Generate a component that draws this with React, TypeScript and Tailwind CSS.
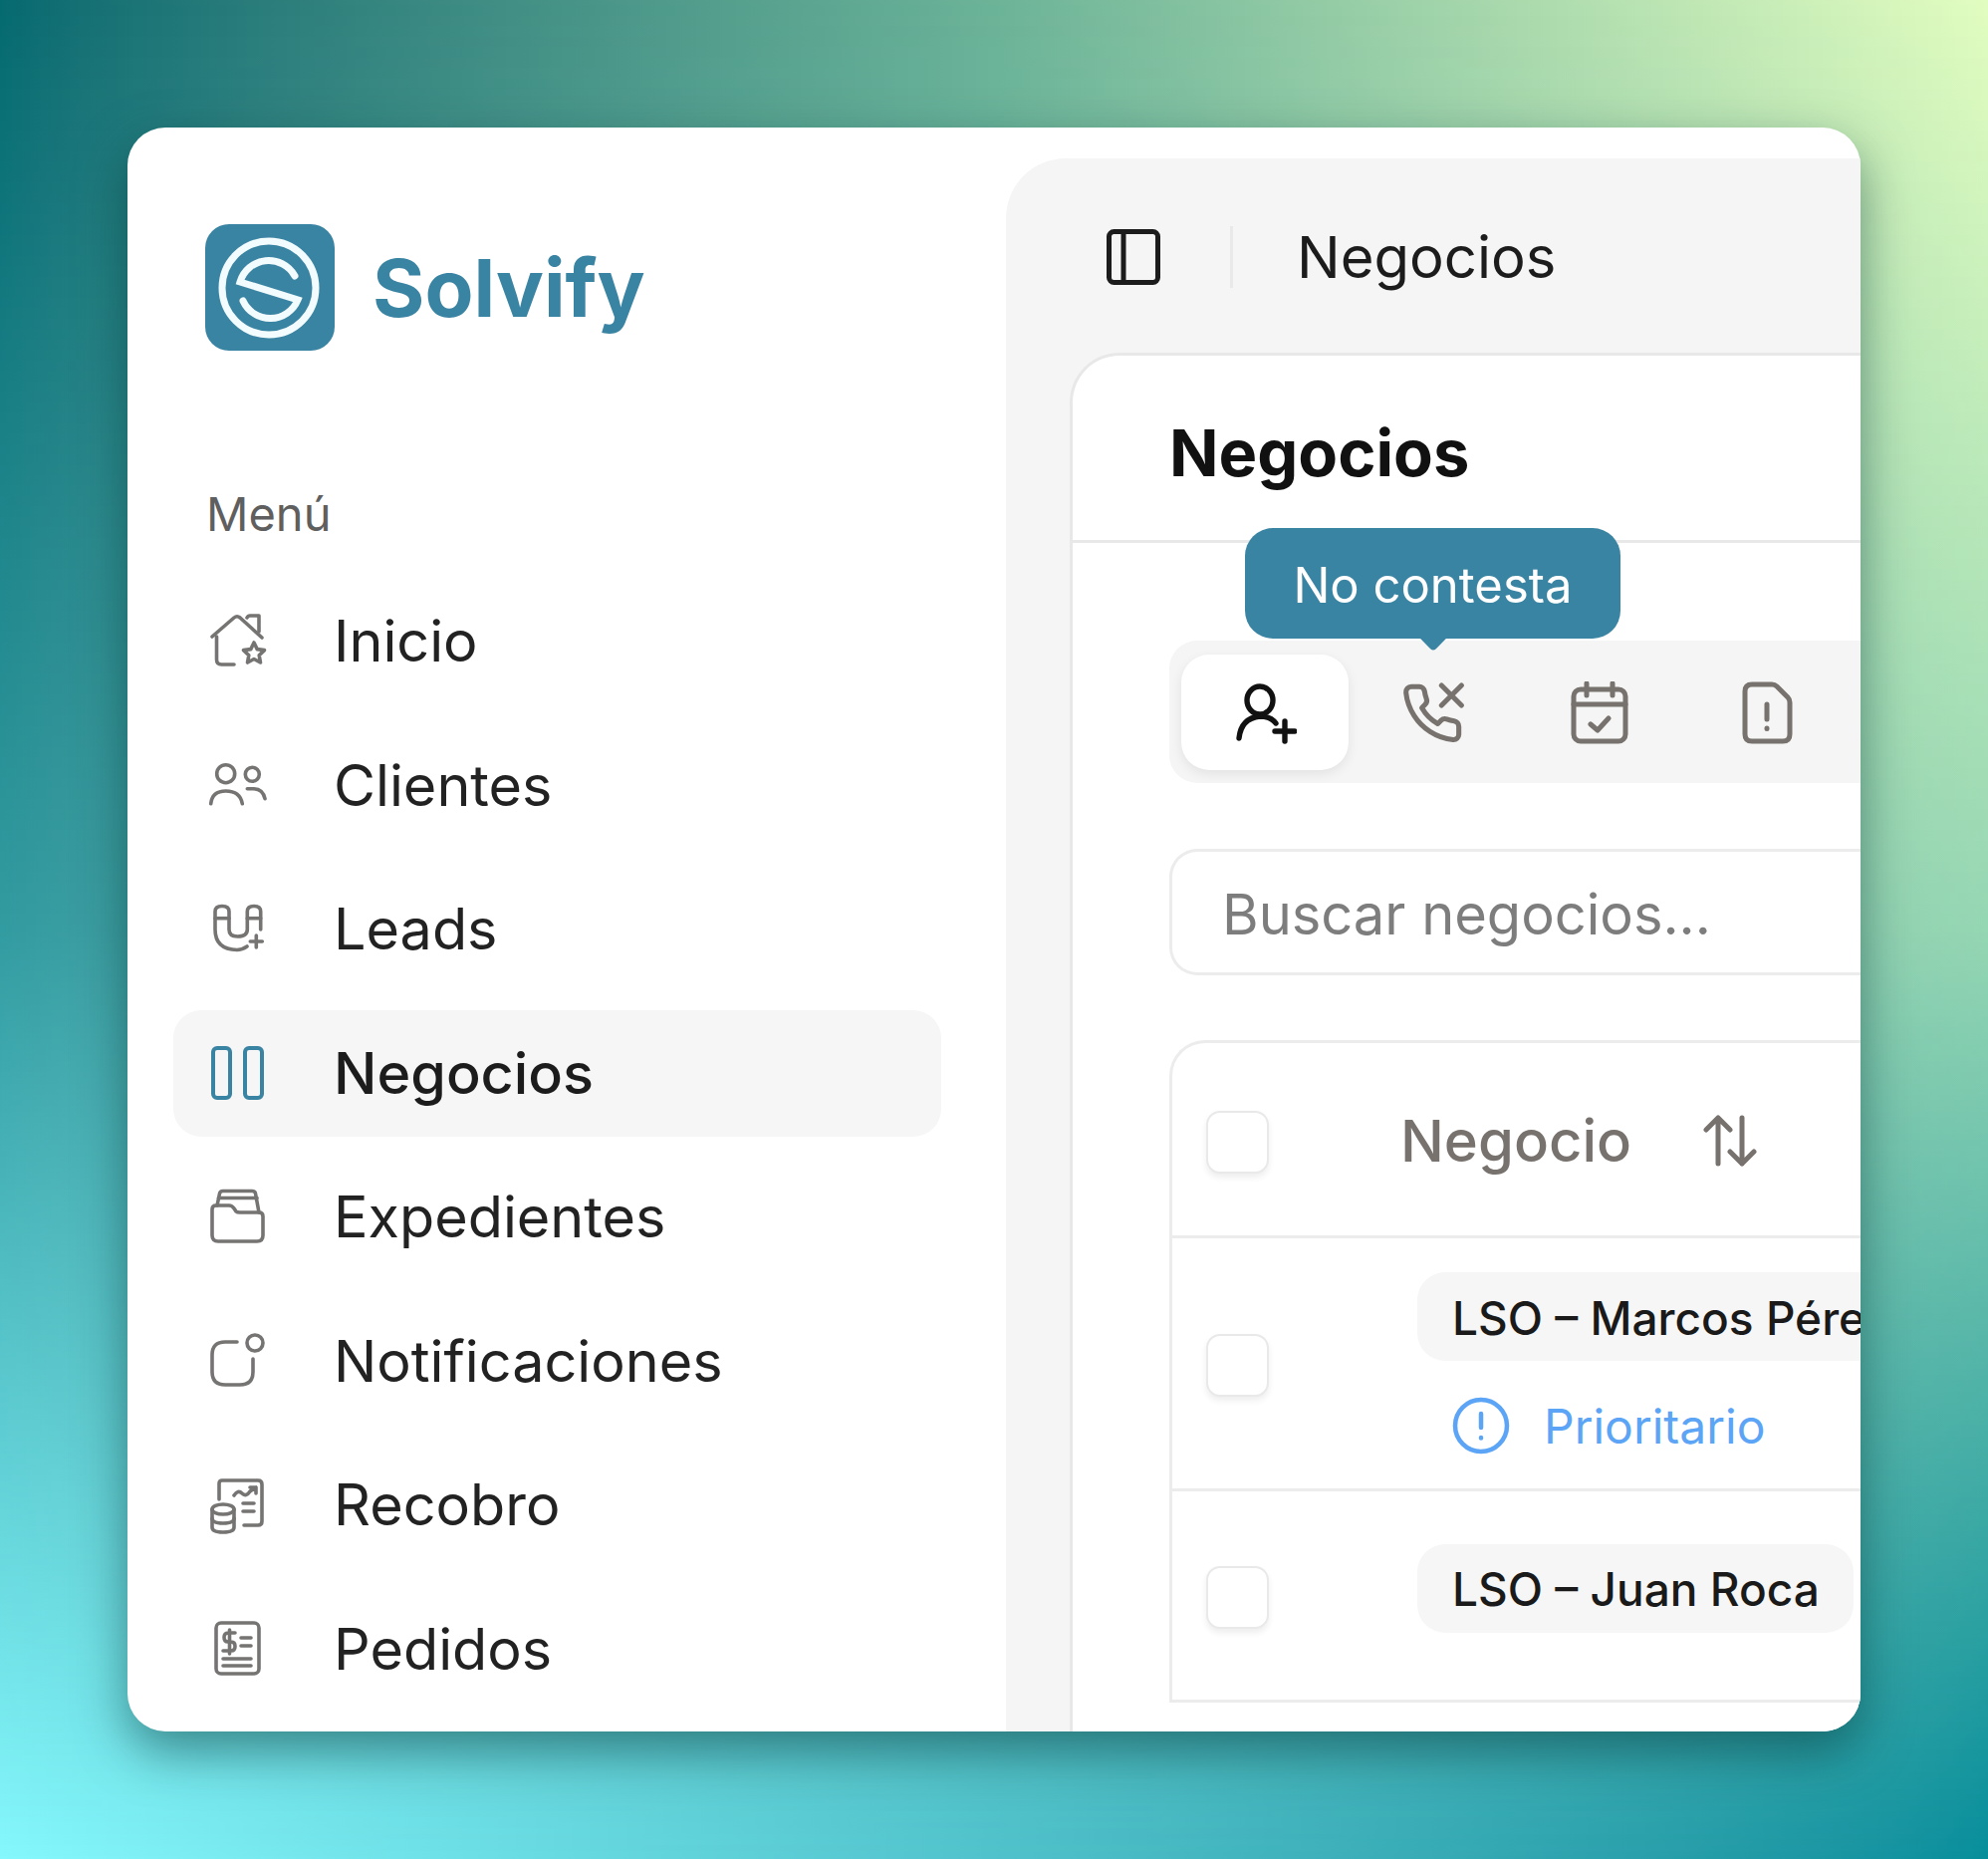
import React from "react";

const BRAND = "#3a84a3";

function NavIcon({ children, color = "#767473", width = 3.6 }: { children: React.ReactNode; color?: string; width?: number }) {
  return (
    <svg viewBox="0 0 60 60" width={60} height={60} fill="none" stroke={color} strokeWidth={width} strokeLinecap="round" strokeLinejoin="round" className="shrink-0">
      {children}
    </svg>
  );
}

const menuItems: { label: string; active?: boolean; icon: React.ReactNode }[] = [
  {
    label: "Inicio",
    icon: (
      <NavIcon>
        <path d="M5 25 L27 6 Q30 3.5 33 6 L55 26" />
        <path d="M40 6 Q41 4 43 4 H52 V20" />
        <path d="M9.5 25 V48 Q9.5 53 14.5 53 H27" />
        <path d="M47 31 L50.2 37.6 L57.5 38.6 L52.2 43.7 L53.5 51 L47 47.5 L40.5 51 L41.8 43.7 L36.5 38.6 L43.8 37.6 Z" />
      </NavIcon>
    ),
  },
  {
    label: "Clientes",
    icon: (
      <NavIcon>
        <circle cx="18.7" cy="18.7" r="9" />
        <circle cx="45.3" cy="19.3" r="7" />
        <path d="M3.7 48.7 Q5 36 18.7 36 Q33 36 35.3 48.7" />
        <path d="M40.3 33.7 H47 Q56 34 58 43.7" />
      </NavIcon>
    ),
  },
  {
    label: "Leads",
    icon: (
      <NavIcon>
        <path d="M40 47 Q35 50.5 30 50.5 Q8 50 8 30 V12 Q8 6.5 15 6.5 Q22 6.5 22 12 V30 Q22 37 30.5 37 Q40.3 37 40.3 30 V12 Q40.3 6.5 47 6.5 Q53.7 6.5 53.7 12 V30" />
        <path d="M8 18.7 H22 M40.3 18.7 H53.7" />
        <path d="M49.3 36 V48 M43.3 42 H55.3" />
      </NavIcon>
    ),
  },
  {
    label: "Negocios",
    active: true,
    icon: (
      <NavIcon color={BRAND} width={4}>
        <rect x="6" y="5" width="17" height="50" rx="4" />
        <rect x="38" y="5" width="17" height="50" rx="4" />
      </NavIcon>
    ),
  },
  {
    label: "Expedientes",
    icon: (
      <NavIcon>
        <path d="M5 22 Q5 18 9 18 H22 Q25 18 27 21 L29 24 Q30 25 33 25 H52 Q56 25 56 29 V48 Q56 54 50 54 H11 Q5 54 5 48 Z" />
        <path d="M10 18 L12.5 6 Q13 3.5 16 3.5 H45 Q48 3.5 48.5 6 L52 25" />
        <path d="M11.5 10.5 H50" />
      </NavIcon>
    ),
  },
  {
    label: "Notificaciones",
    icon: (
      <NavIcon>
        <path d="M30 11 H18 Q5 11 5 24 V41 Q5 54 18 54 H33 Q46 54 46 41 V28" />
        <circle cx="48" cy="12" r="8" />
      </NavIcon>
    ),
  },
  {
    label: "Recobro",
    icon: (
      <NavIcon>
        <path d="M12 24 V8 Q12 5 15 5 H51 Q55 5 55 9 V46 Q55 50 51 50 H37" />
        <path d="M27 20 Q31 14 35 18 Q39 22 43 16 L49 12 M43 12 H49 V18" />
        <path d="M36 28 H47 M36 36 H47" />
        <ellipse cx="16" cy="34" rx="11" ry="5" />
        <path d="M5 34 V52 Q5 57 16 57 Q27 57 27 52 V34" />
        <path d="M5 43 Q5 48 16 48 Q27 48 27 43" />
      </NavIcon>
    ),
  },
  {
    label: "Pedidos",
    icon: (
      <NavIcon>
        <rect x="9" y="4" width="43" height="51" rx="5" />
        <path d="M28 14 H21 Q17 14 17 18.5 Q17 23 21 23 H24 Q28 23 28 27.5 Q28 32 24 32 H16 M22.5 11 V35" />
        <path d="M34 19 H44 M34 27 H44 M16 40 H44 M16 47 H44" />
      </NavIcon>
    ),
  },
];

function Checkbox() {
  return <div className="mt-[3px] h-[63px] w-[63px] shrink-0 rounded-[14px] border-2 border-[#e9e9e9] bg-white shadow-[0_4px_6px_rgba(0,0,0,0.07)]" />;
}

function Logo() {
  return (
    <svg viewBox="0 0 130 127" width={130} height={127} fill="none" stroke="#f2fbfd" strokeWidth={7} strokeLinecap="round" className="shrink-0">
      <rect x="0" y="0" width="130" height="127" rx="24" fill={BRAND} stroke="none" />
      <circle cx="64" cy="64" r="47" />
      <path d="M90 52 A30 30 0 0 0 35 58 L93 76 A30 30 0 0 1 38 77" />
    </svg>
  );
}

function TabIcon({ children, color = "#77726d", width = 5 }: { children: React.ReactNode; color?: string; width?: number }) {
  return (
    <svg viewBox="0 0 64 64" width={64} height={64} fill="none" stroke={color} strokeWidth={width} strokeLinecap="round" strokeLinejoin="round">
      {children}
    </svg>
  );
}

export default function App() {
  return (
    <div className="relative h-[1866px] w-[1996px] overflow-hidden bg-linear-to-r from-[#056a70] via-[#6cb398] to-[#e2fdc0] [font-family:Inter,sans-serif]">
      {/* bottom half of the backdrop fades in over the top gradient */}
      <div className="absolute inset-0 bg-linear-to-r from-[#85f8fd] to-[#068e9b] [mask-image:linear-gradient(to_bottom,transparent,rgba(0,0,0,0.35)_50%,black)]" />

      <div className="relative p-[128px]">
        <div className="flex h-[1610px] w-[1740px] overflow-hidden rounded-[38px] bg-white shadow-[0_20px_50px_rgba(0,50,50,0.5)]">
          {/* Sidebar */}
          <aside className="w-[882px] shrink-0 pt-[97px]">
            <div className="ml-[78px] flex items-center gap-[38px]">
              <Logo />
              <span className="text-[80px] leading-none font-bold text-[#3a84a3]">Solvify</span>
            </div>

            <div className="mt-[134px] ml-[79px] text-[47px] leading-[60px] text-[#5f5f5f]">Menú</div>

            <nav className="mt-[34px] ml-[46px] flex w-[771px] flex-col gap-[17.5px]">
              {menuItems.map((item) => (
                <div
                  key={item.label}
                  className={`flex h-[127px] items-center gap-[67px] rounded-[28px] pl-[34px] text-[57.5px] ${
                    item.active ? "bg-[#f6f6f6] font-medium text-[#1c1c1c]" : "text-[#222222]"
                  }`}
                >
                  {item.icon}
                  <span>{item.label}</span>
                </div>
              ))}
            </nav>
          </aside>

          {/* Main panel */}
          <main className="mt-[31px] min-w-0 flex-1 overflow-hidden rounded-tl-[60px] bg-[#f5f5f5]">
            <header className="flex h-[195px] items-center pt-[2px] pl-[101px]">
              <svg viewBox="0 0 54 56" width={54} height={56} fill="none" stroke="#1c1c1c" strokeWidth={5} strokeLinejoin="round" className="shrink-0">
                <rect x="2.5" y="2.5" width="49" height="51" rx="5" />
                <path d="M17 2.5 V53.5" />
              </svg>
              <div className="mr-[64px] ml-[70px] h-[62px] w-[3px] bg-[#e9e9e9]" />
              <h2 className="pt-[2px] text-[58px] text-[#1c1c1c]">Negocios</h2>
            </header>

            <section className="ml-[64px] h-[1500px] w-[900px] rounded-tl-[50px] border-t-[3px] border-l-[3px] border-[#e8e8e8] bg-white">
              <div className="flex h-[188px] items-center border-b-[3px] border-[#e8e8e8] pt-[10px] pl-[97px]">
                <h1 className="text-[65px] font-bold text-[#111111]">Negocios</h1>
              </div>

              <div className="pl-[97px]">
                {/* Tabs */}
                <div className="relative mt-[98px] flex h-[143px] w-[820px] items-center rounded-l-[28px] bg-[#f5f5f5] pl-[12px]">
                  <div className="absolute top-[-113px] left-[76px] flex h-[111px] w-[377px] items-center justify-center rounded-[28px] bg-[#3a84a3] pt-[4px] text-[49px] text-white">
                    No contesta
                    <div className="absolute bottom-[-8px] left-[177px] h-[24px] w-[24px] rotate-45 rounded-[4px] bg-[#3a84a3]" />
                  </div>
                  <div className="flex h-[116px] w-[168px] items-center justify-center rounded-[28px] bg-white pt-[2px] shadow-[0_4px_12px_rgba(0,0,0,0.08)]">
                    <TabIcon color="#111111" width={5.4}>
                      <ellipse cx="27" cy="19" rx="13" ry="14" />
                      <path d="M6 57 Q8 37 27 35 Q38 35 43 42" />
                      <path d="M52 40 V60 M42 50 H62" />
                    </TabIcon>
                  </div>
                  <div className="flex h-[116px] w-[168px] items-center justify-center pt-[2px]">
                    <TabIcon>
                      <g transform="scale(2.667)" strokeWidth={1.9}>
                        <path d="M22 16.92v3a2 2 0 0 1-2.18 2 19.79 19.79 0 0 1-8.63-3.07 19.5 19.5 0 0 1-6-6 19.79 19.79 0 0 1-3.07-8.67A2 2 0 0 1 4.11 2h3a2 2 0 0 1 2 1.72 12.84 12.84 0 0 0 .7 2.81 2 2 0 0 1-.45 2.11L8.09 9.91a16 16 0 0 0 6 6l1.27-1.27a2 2 0 0 1 2.11-.45 12.84 12.84 0 0 0 2.81.7A2 2 0 0 1 22 16.92z" />
                        <path d="M15.5 1.5 L23 9 M23 1.5 L15.5 9" />
                      </g>
                    </TabIcon>
                  </div>
                  <div className="flex h-[116px] w-[168px] items-center justify-center pt-[2px]">
                    <TabIcon>
                      <rect x="6" y="8" width="52" height="52" rx="7" />
                      <path d="M6 23 H58 M19 2 V14 M45 2 V14 M23 43 L30 49 L41 37" />
                    </TabIcon>
                  </div>
                  <div className="flex h-[116px] w-[168px] items-center justify-center pt-[2px]">
                    <TabIcon>
                      <path d="M17 3 H37 Q40 3 42 5 L53 16 Q55 18 55 21 V53 Q55 60 48 60 H17 Q10 60 10 53 V10 Q10 3 17 3Z" />
                      <path d="M32 23 V38 M32 47 V47.5" />
                    </TabIcon>
                  </div>
                </div>

                {/* Search */}
                <div className="mt-[66px] flex h-[127px] w-[820px] items-center rounded-l-[28px] border-y-[3px] border-l-[3px] border-[#ececec] bg-white pt-[4px] pl-[50px] text-[56px] text-[#7d7d7d]">
                  Buscar negocios...
                </div>

                {/* Table */}
                <div className="mt-[65px] w-[820px] rounded-tl-[36px] border-t-[3px] border-l-[3px] border-[#ececec]">
                  <div className="flex h-[196px] items-center border-b-[3px] border-[#ececec] pt-[2px] pl-[34px]">
                    <Checkbox />
                    <span className="mt-[2px] ml-[132px] text-[58px] font-medium text-[#77726d]">Negocio</span>
                    <svg viewBox="0 0 54 54" width={54} height={54} fill="none" stroke="#77726d" strokeWidth={5} strokeLinecap="round" strokeLinejoin="round" className="ml-[72px] shrink-0">
                      <path d="M15 50 V4 M3 16 L15 4 L27 16" />
                      <path d="M39 4 V50 M27 38 L39 50 L51 38" />
                    </svg>
                  </div>

                  <div className="flex h-[254px] items-center border-b-[3px] border-[#ececec] pl-[34px]">
                    <Checkbox />
                    <div className="ml-[149px] flex h-full flex-col pt-[34px]">
                      <div className="flex h-[89px] w-[560px] items-center rounded-l-[28px] bg-[#f6f6f6] pt-[3px] pl-[35px] text-[46px] font-medium whitespace-nowrap text-[#1a1a1a]">
                        LSO – Marcos Pérez
                      </div>
                      <div className="mt-[28px] ml-[35px] flex items-center gap-[34px] text-[48px] text-[#5ba4f6]">
                        <svg viewBox="0 0 58 58" width={58} height={58} fill="none" stroke="#5ba4f6" strokeWidth={4.5} strokeLinecap="round" className="shrink-0">
                          <circle cx="29" cy="29" r="26" />
                          <path d="M29 17 V31 M29 41 V41.5" />
                        </svg>
                        <span className="pt-[2px]">Prioritario</span>
                      </div>
                    </div>
                  </div>

                  <div className="flex h-[212px] items-center border-b-[3px] border-[#ececec] pl-[34px]">
                    <Checkbox />
                    <div className="mb-[15px] ml-[149px] flex h-[89px] w-[438px] items-center rounded-[28px] bg-[#f6f6f6] pt-[3px] pl-[35px] text-[46px] font-medium whitespace-nowrap text-[#1a1a1a]">
                      LSO – Juan Roca
                    </div>
                  </div>
                </div>
              </div>
            </section>
          </main>
        </div>
      </div>
    </div>
  );
}
